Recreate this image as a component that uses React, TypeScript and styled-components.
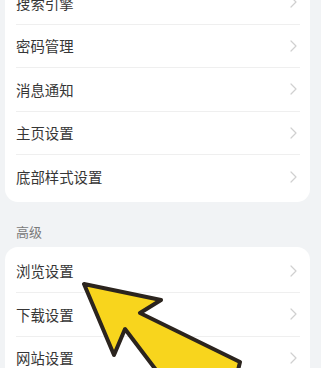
import React from "react";
import styled, { createGlobalStyle } from "styled-components";

const Global = createGlobalStyle`
  html, body {
    margin: 0;
    padding: 0;
    background: #f1f3f5;
    font-family: "Noto Sans CJK SC", "Noto Sans", sans-serif;
  }
  #root { overflow: hidden; height: 368px; position: relative; }
`;

const Page = styled.div`
  display: flex;
  flex-direction: column;
  padding: 0 11px 0 5px;
`;

const Card = styled.div<{ $first?: boolean }>`
  background: #ffffff;
  border-radius: 13px;
  padding: 3px 10px 3px 11px;
  margin-top: ${(p) => (p.$first ? "-22px" : "0")};
`;

const Row = styled.div<{ $last?: boolean }>`
  height: 43.5px;
  box-sizing: border-box;
  display: flex;
  align-items: center;
  justify-content: space-between;
  border-bottom: ${(p) => (p.$last ? "none" : "1px solid #efefef")};
`;

const Label = styled.span`
  font-size: 14.4px;
  color: #363636;
  letter-spacing: 0;
`;

const Chevron = styled.svg`
  width: 7px;
  height: 12px;
  margin-right: 3px;
`;

const SectionTitle = styled.div`
  font-size: 13px;
  color: #7a7a7a;
  padding: 20px 0 6px 11px;
  line-height: 19px;
`;

const ArrowLayer = styled.svg`
  position: absolute;
  left: 0;
  top: 0;
  width: 321px;
  height: 368px;
  pointer-events: none;
`;

const Arrow = () => (
  <Chevron viewBox="0 0 7 12">
    <path d="M1 1 L6 6 L1 11" fill="none" stroke="#d0d0d0" strokeWidth="1.2" strokeLinecap="round" strokeLinejoin="round" />
  </Chevron>
);

const group1 = ["搜索引擎", "密码管理", "消息通知", "主页设置", "底部样式设置"];
const group2 = ["浏览设置", "下载设置", "网站设置", "其他设置"];

export default function App() {
  return (
    <>
      <Global />
      <Page>
        <Card $first>
          {group1.map((t, i) => (
            <Row key={t} $last={i === group1.length - 1}>
              <Label>{t}</Label>
              <Arrow />
            </Row>
          ))}
        </Card>
        <SectionTitle>高级</SectionTitle>
        <Card>
          {group2.map((t, i) => (
            <Row key={t} $last={i === group2.length - 1}>
              <Label>{t}</Label>
              <Arrow />
            </Row>
          ))}
        </Card>
      </Page>
      <ArrowLayer viewBox="0 0 321 368">
        <polygon
          points="84,284 161,300 140,313 240,362 232,395 175,395 125,329 114,355"
          fill="#f8d51d"
          stroke="#2b241e"
          strokeWidth="4"
          strokeLinejoin="round"
        />
      </ArrowLayer>
    </>
  );
}
